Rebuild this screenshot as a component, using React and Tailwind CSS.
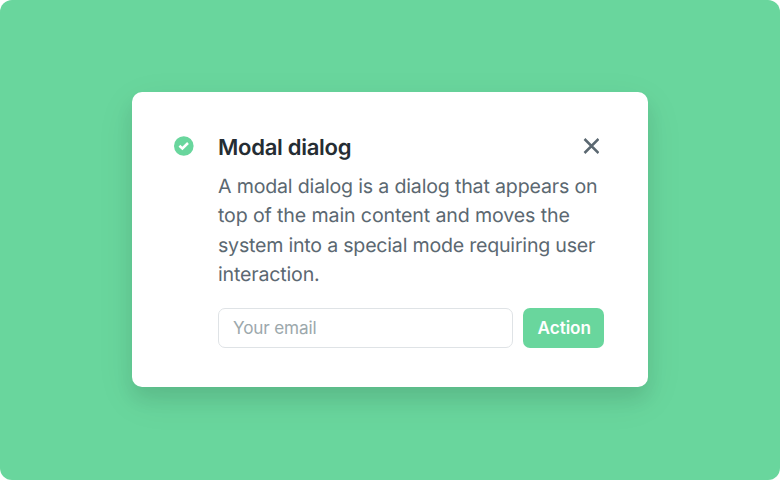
export default function App() {
  return (
    <div className="h-[480px] w-[780px] bg-white font-['Inter',sans-serif] antialiased [text-rendering:geometricPrecision]">
      <main className="flex h-full w-full items-start justify-center rounded-xl bg-[#69d69d] pt-[92px]">
        <section
          role="dialog"
          aria-labelledby="dialog-title"
          className="flex h-[294.6px] w-[516px] items-start rounded-[10px] bg-white pt-[39px] pr-[44px] pl-[41.5px] shadow-[0_12px_40px_rgba(0,0,0,0.07),0_12px_18px_rgba(0,0,0,0.08)]"
        >
          <svg className="mt-[5px] mr-[24.5px] h-5 w-5 shrink-0" viewBox="0 0 20 20" fill="none">
            <circle cx="9.8" cy="10" r="9.8" fill="#69d69d" />
            <path d="M5.4 9.8 8.4 12.5 14 7" stroke="white" strokeWidth="2.5" />
          </svg>
          <div className="flex-1">
            <header className="flex h-[30px] items-center justify-between">
              <h1 id="dialog-title" className="pt-[3px] text-[22.05px] leading-[30px] font-semibold tracking-[-0.29px] text-[#252d33]">
                Modal dialog
              </h1>
              <button aria-label="Close" className="mr-[5px]">
                <svg className="h-4 w-4" viewBox="0 0 16 16" fill="none" stroke="#5b6871" strokeWidth="2.5">
                  <path d="M1.5 1 15.5 15M15.5 1 1.5 15" />
                </svg>
              </button>
            </header>
            <p className="mt-[11px] text-[19.6px] leading-[29.4px] tracking-[-0.18px] whitespace-nowrap text-[#5b6871]">
              A modal dialog is a dialog that appears on
              <br />
              <span className="tracking-[-0.13px]">top of the main content and moves the</span>
              <br />
              <span className="tracking-[-0.22px]">system into a special mode requiring user</span>
              <br />
              interaction.
            </p>
            <form className="mt-[18.4px] flex gap-[9.5px]">
              <input
                placeholder="Your email"
                className="h-[40px] w-[295px] rounded-[7px] border border-[#dfe3e6] px-[14px] pb-[2px] text-[17.15px] tracking-[-0.15px] placeholder:text-[#9ca8ac]"
              />
              <button type="button" className="mr-[0.5px] h-[39.5px] flex-1 rounded-[7px] bg-[#69d69d] pl-[2.5px] text-[17.15px] font-semibold tracking-[-0.05px] text-white">
                Action
              </button>
            </form>
          </div>
        </section>
      </main>
    </div>
  );
}
